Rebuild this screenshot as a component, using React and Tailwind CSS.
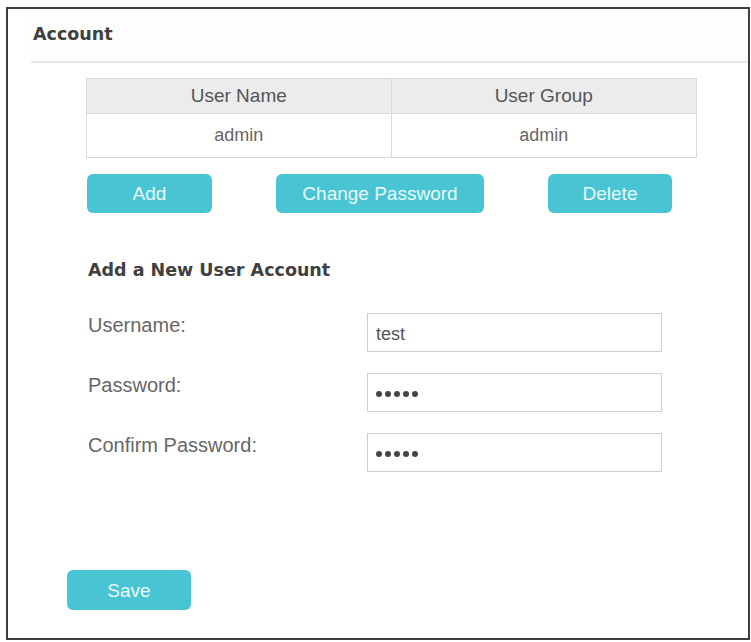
import React from "react";

const sans = { fontFamily: '"Liberation Sans", Arial, sans-serif' };
const verdana = { fontFamily: '"DejaVu Sans", Verdana, sans-serif' };

function TealButton({ children, className = "" }) {
  return (
    <button
      type="button"
      className={`h-[39px] rounded-[6px] bg-[#48c4d2] text-[19px] leading-none text-[#e9fbfd] flex items-center justify-center ${className}`}
      style={sans}
    >
      {children}
    </button>
  );
}

function Dots() {
  return (
    <div className="flex items-center gap-[3px] pt-[3px]">
      {[0, 1, 2, 3, 4].map((i) => (
        <span key={i} className="block w-[6px] h-[6px] rounded-full bg-[#444]" />
      ))}
    </div>
  );
}

function FieldRow({ label, children, className = "" }) {
  return (
    <div className={`flex items-start ${className}`}>
      <div className="w-[279px] pt-[1px] text-[20px] leading-[22px] text-[#666]" style={sans}>
        {label}
      </div>
      <div className="w-[295px] h-[39px] border border-[#cfcfcf] bg-white flex items-center pl-[8px]">
        {children}
      </div>
    </div>
  );
}

export default function App() {
  return (
    <div className="bg-white w-[751px] h-[642px] pt-[7px] pl-[6px]">
      <div className="w-[744px] h-[633px] border-2 border-[#3e3e3e] bg-white flex flex-col">
        {/* page header */}
        <div className="ml-[23px] pl-[2px] pt-[15px] h-[54px] border-b-2 border-[#e6e6e6] bg-[#fdfdfd]">
          <div className="text-[17.5px] leading-[20px] font-bold text-[#404040]" style={verdana}>
            Account
          </div>
        </div>

        {/* account list */}
        <div className="ml-[78px] mt-[15px] w-[611px] h-[80px] border border-[#dadada] flex flex-col" style={sans}>
          <div className="grid grid-cols-2 h-[35px] bg-[#ececec] border-b border-[#dadada] text-[19px] text-[#555]">
            <div className="flex items-center justify-center border-r border-[#dadada]">User Name</div>
            <div className="flex items-center justify-center">User Group</div>
          </div>
          <div className="grid grid-cols-2 flex-1 text-[18px] text-[#666]">
            <div className="flex items-center justify-center border-r border-[#dadada]">admin</div>
            <div className="flex items-center justify-center">admin</div>
          </div>
        </div>

        <div className="ml-[79px] mt-[16px] flex gap-[64px]">
          <TealButton className="w-[125px]">Add</TealButton>
          <TealButton className="w-[208px]">Change Password</TealButton>
          <TealButton className="w-[124px]">Delete</TealButton>
        </div>

        {/* new user form */}
        <div className="ml-[80px] mt-[47px] text-[17.5px] leading-[20px] font-bold text-[#404040]" style={verdana}>
          Add a New User Account
        </div>

        <div className="ml-[80px] mt-[33px] flex flex-col gap-[21px]">
          <FieldRow label="Username:">
            <span className="text-[18px] text-[#555] pt-[4px]" style={sans}>test</span>
          </FieldRow>
          <FieldRow label="Password:">
            <Dots />
          </FieldRow>
          <FieldRow label="Confirm Password:">
            <Dots />
          </FieldRow>
        </div>

        <div className="ml-[59px] mt-[98px]">
          <TealButton className="w-[124px] h-[40px]">Save</TealButton>
        </div>
      </div>
    </div>
  );
}
